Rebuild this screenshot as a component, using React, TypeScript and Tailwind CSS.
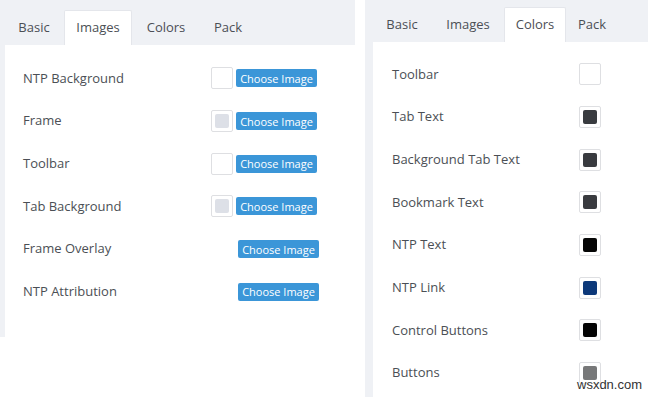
import React from "react";

type Tab = { name: string; w: string };

const leftTabs: Tab[] = [
  { name: "Basic", w: "w-[60px]" },
  { name: "Images", w: "w-[68px]" },
  { name: "Colors", w: "w-[68px]" },
  { name: "Pack", w: "w-[56px]" },
];

const rightTabs: Tab[] = [
  { name: "Basic", w: "w-[60px]" },
  { name: "Images", w: "w-[72px]" },
  { name: "Colors", w: "w-[62px]" },
  { name: "Pack", w: "w-[52px]" },
];

const imageRows = [
  { label: "NTP Background", swatch: "empty" },
  { label: "Frame", swatch: "#dde0e7" },
  { label: "Toolbar", swatch: "empty" },
  { label: "Tab Background", swatch: "#dde0e7" },
  { label: "Frame Overlay", swatch: null },
  { label: "NTP Attribution", swatch: null },
];

const colorRows = [
  { label: "Toolbar", color: null },
  { label: "Tab Text", color: "#393b3f" },
  { label: "Background Tab Text", color: "#393b3f" },
  { label: "Bookmark Text", color: "#393b3f" },
  { label: "NTP Text", color: "#050505" },
  { label: "NTP Link", color: "#0d397a" },
  { label: "Control Buttons", color: "#050505" },
  { label: "Buttons", color: "#777879" },
];

const Swatch = ({ color }: { color: string | null }) => (
  <div className="w-[22px] h-[22px] bg-white border border-[#dedfe2] rounded-[2px] flex items-center justify-center">
    {color && <div className="w-[14px] h-[14px] rounded-[2px]" style={{ backgroundColor: color }} />}
  </div>
);

const TabBar = ({ tabs, active, top }: { tabs: Tab[]; active: string; top: string }) => (
  <div className={`flex bg-[#eff1f5] ${top}`}>
    {tabs.map((t) => (
      <div
        key={t.name}
        className={`${t.w} h-[35px] flex items-center justify-center text-[13px] text-[#4b4f55] ${
          t.name === active ? "bg-white border border-b-0 border-[#e4e6eb] rounded-t-[2px]" : ""
        }`}
      >
        {t.name}
      </div>
    ))}
  </div>
);

export default function App() {
  return (
    <div className="relative w-[650px] h-[397px] bg-white flex gap-[10px] font-['Open_Sans',sans-serif] overflow-hidden">
      {/* Images panel */}
      <div className="w-[355px] h-[337px] flex flex-col bg-[#eff1f5]">
        <TabBar tabs={leftTabs} active="Images" top="pt-[10px] pl-[4px]" />
        <div className="flex-1 ml-[5px] bg-white pt-[12px] pl-[18px]">
          {imageRows.map((r) => (
            <div key={r.label} className="h-[42.7px] flex items-center">
              <div className="w-[188px] text-[13px] text-[#4b4f55]">{r.label}</div>
              {r.swatch && <Swatch color={r.swatch === "empty" ? null : r.swatch} />}
              <button
                className={`${r.swatch ? "ml-[3px]" : "ml-[27px]"} w-[81px] h-[18px] bg-[#3b96d8] rounded-[2px] text-white text-[11px] leading-none`}
              >
                Choose Image
              </button>
            </div>
          ))}
        </div>
      </div>

      {/* Colors panel */}
      <div className="w-[283px] h-[397px] flex flex-col bg-[#eff1f5]">
        <TabBar tabs={rightTabs} active="Colors" top="pt-[7px] pl-[7px]" />
        <div className="flex-1 ml-[8px] bg-white pt-[11px] pl-[19px]">
          {colorRows.map((r) => (
            <div key={r.label} className="h-[42.7px] flex items-center">
              <div className="w-[187px] text-[13px] text-[#4b4f55]">{r.label}</div>
              <Swatch color={r.color} />
            </div>
          ))}
        </div>
      </div>

      <div className="absolute left-[577px] top-[378px] text-[13px] leading-none text-[#333] font-['Liberation_Sans',sans-serif] [text-shadow:0_0_3px_#fff]">
        wsxdn.com
      </div>
    </div>
  );
}
